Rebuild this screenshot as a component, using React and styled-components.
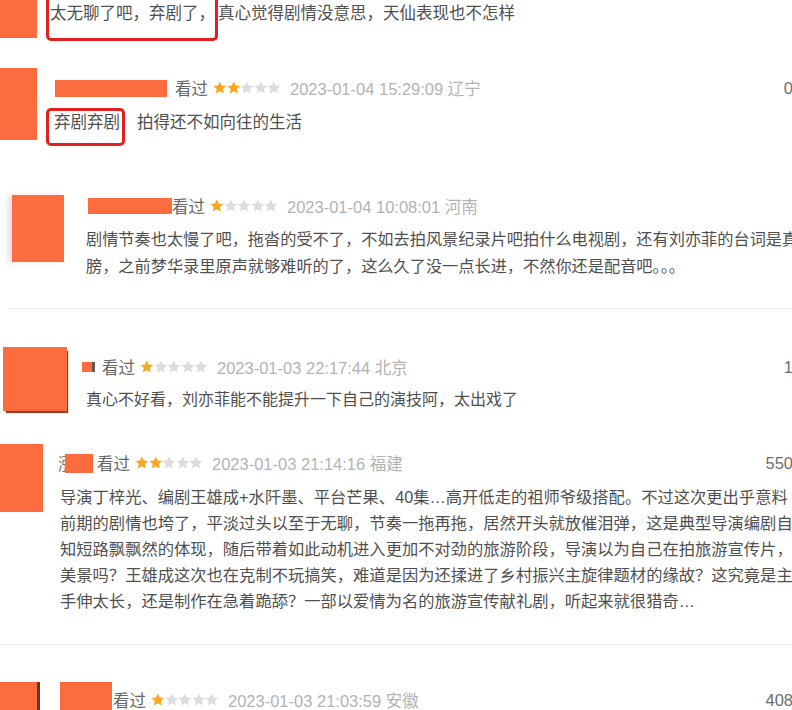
import styled, { createGlobalStyle } from "styled-components";

const ORANGE = "#fc6c3f";
const RED = "#e3201f";

const GlobalStyle = createGlobalStyle`
  html, body { margin: 0; padding: 0; background: #fff; }
  body { font-family: "Liberation Sans", "Noto Sans CJK SC", sans-serif; }
  * { box-sizing: border-box; }
`;

const Page = styled.div`
  width: 792px;
  height: 710px;
  overflow: hidden;
  background: #fff;
`;

const Comment = styled.div`
  display: flex;
  align-items: flex-start;
  height: ${(p) => p.$h}px;
  margin-top: ${(p) => p.$top || 0}px;
  margin-left: ${(p) => p.$inset || 0}px;
  padding-left: ${(p) => p.$pad || 0}px;
  border-bottom: ${(p) => (p.$divider ? "1px solid #ececec" : "none")};
`;

const Avatar = styled.div`
  flex-shrink: 0;
  width: ${(p) => p.$w}px;
  height: ${(p) => p.$h}px;
  background: ${ORANGE};
  box-shadow: ${(p) => p.$shade || "none"};
`;

const Body = styled.div`
  flex: 1;
  min-width: 0;
  margin-left: ${(p) => p.$gap}px;
`;

const Meta = styled.div`
  display: flex;
  align-items: center;
  height: ${(p) => p.$h || 20}px;
  margin-top: ${(p) => p.$top || 0}px;
  padding-left: ${(p) => p.$indent || 0}px;
  font-size: 16.5px;
  white-space: nowrap;
`;

const Name = styled.span`
  flex-shrink: 0;
  width: ${(p) => p.$w}px;
  height: ${(p) => p.$h}px;
  margin-right: ${(p) => p.$gap}px;
  background: ${ORANGE};
  border-right: ${(p) => (p.$edge ? "3px solid #5c5c5c" : "none")};
`;

const NameStub = styled.span`
  display: inline-block;
  flex-shrink: 0;
  width: 7px;
  overflow: hidden;
  color: #777;
`;

const Watched = styled.span`
  color: #666;
  margin-right: 5px;
`;

const StarRow = styled.span`
  display: inline-flex;
  align-items: center;
`;

const DateText = styled.span`
  color: #b3b3b3;
  margin-left: 9px;
`;

const Count = styled.span`
  margin-left: auto;
  margin-right: -1px;
  color: #6e6e6e;
`;

const Text = styled.div`
  margin-top: ${(p) => p.$top || 0}px;
  padding-left: ${(p) => p.$indent || 0}px;
  font-size: ${(p) => p.$size}px;
  line-height: ${(p) => p.$lh}px;
  color: #4f4f4f;
  white-space: nowrap;
`;

const Highlight = styled.span`
  display: inline-block;
  border: 3px solid ${RED};
  border-radius: 5px;
  padding: ${(p) => p.$pad};
  margin-right: ${(p) => p.$pull || 0}px;
  line-height: 22px;
`;

const Rest = styled.span`
  margin-left: ${(p) => p.$gap || 0}px;
`;

const Star = ({ on }) => (
  <svg width="13.6" height="13.6" viewBox="0 0 20 20">
    <path
      d="M10 .6l2.9 6.1 6.6.7-4.9 4.5 1.4 6.6L10 15.2l-5.9 3.3 1.4-6.6L.6 7.4l6.6-.7z"
      fill={on ? "#f6a825" : "#dcdcdc"}
    />
  </svg>
);

const Stars = ({ n }) => (
  <StarRow>
    {[0, 1, 2, 3, 4].map((i) => (
      <Star key={i} on={i < n} />
    ))}
  </StarRow>
);

const MetaLine = ({ meta }) => (
  <Meta $h={meta.h} $top={meta.top} $indent={meta.indent}>
    {meta.stub && <NameStub>涨</NameStub>}
    <Name $w={meta.nameW} $h={meta.nameH} $gap={meta.nameGap} $edge={meta.edge} />
    <Watched>看过</Watched>
    <Stars n={meta.stars} />
    <DateText>{meta.date}</DateText>
    {meta.count && <Count>{meta.count}</Count>}
  </Meta>
);

const longLines = [
  "导演丁梓光、编剧王雄成+水阡墨、平台芒果、40集…高开低走的祖师爷级搭配。不过这次更出乎意料",
  "前期的剧情也垮了，平淡过头以至于无聊，节奏一拖再拖，居然开头就放催泪弹，这是典型导演编剧自",
  "知短路飘飘然的体现，随后带着如此动机进入更加不对劲的旅游阶段，导演以为自己在拍旅游宣传片，",
  "美景吗？王雄成这次也在克制不玩搞笑，难道是因为还揉进了乡村振兴主旋律题材的缘故？这究竟是主",
  "手伸太长，还是制作在急着跪舔？一部以爱情为名的旅游宣传献礼剧，听起来就很猎奇…",
];

export default function App() {
  return (
    <>
      <GlobalStyle />
      <Page>
        {/* 1 */}
        <Comment $top={-20} $h={88}>
          <Avatar $w={37} $h={58} />
          <Body $gap={9}>
            <Text $size={16.5} $lh={22}>
              <Highlight $pad="19px 0 14px 1px" $pull={-3}>太无聊了吧，弃剧了，</Highlight>
              <Rest $gap={3}>真心觉得剧情没意思，天仙表现也不怎样</Rest>
            </Text>
          </Body>
        </Comment>

        {/* 2 */}
        <Comment $h={127}>
          <Avatar $w={37} $h={72} />
          <Body $gap={9}>
            <MetaLine
              meta={{
                top: 10, indent: 9, nameW: 112, nameH: 17, nameGap: 8,
                stars: 2, date: "2023-01-04 15:29:09 辽宁", count: "0",
              }}
            />
            <Text $size={16.5} $lh={22} $top={10}>
              <Highlight $pad="0 2px 10px 5px">弃剧弃剧</Highlight>
              <Rest $gap={12}>拍得还不如向往的生活</Rest>
            </Text>
          </Body>
        </Comment>

        {/* 3 */}
        <Comment $h={114} $inset={8} $pad={4} $divider>
          <Avatar $w={52} $h={67} $shade="-4px 0 5px rgba(190, 160, 150, 0.35)" />
          <Body $gap={22}>
            <MetaLine
              meta={{
                top: 1, indent: 2, nameW: 84, nameH: 16, nameGap: 0,
                stars: 1, date: "2023-01-04 10:08:01 河南",
              }}
            />
            <Text $size={16.2} $lh={27} $top={10}>
              <div>剧情节奏也太慢了吧，拖沓的受不了，不如去拍风景纪录片吧拍什么电视剧，还有刘亦菲的台词是真</div>
              <div>膀，之前梦华录里原声就够难听的了，这么久了没一点长进，不然你还是配音吧。。。</div>
            </Text>
          </Body>
        </Comment>

        {/* 4 */}
        <Comment $top={38} $h={97} $pad={3}>
          <Avatar $w={64} $h={64} $shade="2px 3px 1px -1px #7d4a2e" />
          <Body $gap={15}>
            <MetaLine
              meta={{
                top: 10, nameW: 13, nameH: 10, nameGap: 7, edge: true,
                stars: 1, date: "2023-01-03 22:17:44 北京", count: "1",
              }}
            />
            <Text $size={16} $lh={27} $top={9} $indent={4}>
              真心不好看，刘亦菲能不能提升一下自己的演技阿，太出戏了
            </Text>
          </Body>
        </Comment>

        {/* 5 */}
        <Comment $h={201} $divider>
          <Avatar $w={43} $h={68} />
          <Body $gap={15}>
            <MetaLine
              meta={{
                top: 9, stub: true, nameW: 28, nameH: 19, nameGap: 4,
                stars: 2, date: "2023-01-03 21:14:16 福建", count: "550",
              }}
            />
            <Text $size={16.3} $lh={26} $top={11} $indent={2}>
              {longLines.map((l) => (
                <div key={l}>{l}</div>
              ))}
            </Text>
          </Body>
        </Comment>

        {/* 6 */}
        <Comment $top={37} $h={60}>
          <Avatar $w={37} $h={60} $shade="3px 0 0 #5e3a28" />
          <Body $gap={23}>
            <MetaLine
              meta={{
                h: 36, nameW: 52, nameH: 36, nameGap: 1,
                stars: 1, date: "2023-01-03 21:03:59 安徽", count: "408",
              }}
            />
          </Body>
        </Comment>
      </Page>
    </>
  );
}
